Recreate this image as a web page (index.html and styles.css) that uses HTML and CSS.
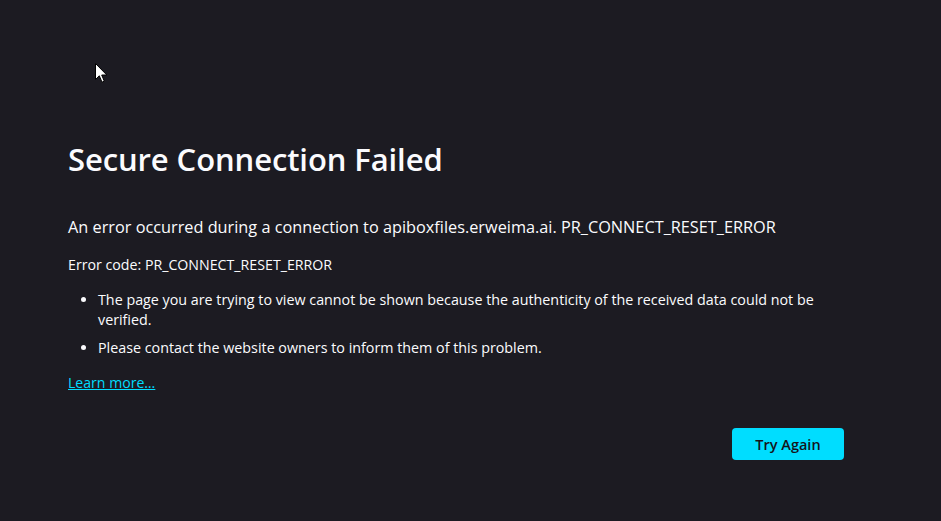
FILE: index.html
```html
<!DOCTYPE html>
<html lang="en">
<head>
<meta charset="utf-8">
<title>Problem loading page</title>
<link rel="stylesheet" href="styles.css">
</head>
<body>
<main class="container">
  <h1 class="title">Secure Connection Failed</h1>
  <p class="short-desc">An error occurred during a connection to apiboxfiles.erweima.ai. PR_CONNECT_RESET_ERROR</p>
  <p class="error-code">Error code: PR_CONNECT_RESET_ERROR</p>
  <ul class="long-desc">
    <li>The page you are trying to view cannot be shown because the authenticity of the received data could not be verified.</li>
    <li>Please contact the website owners to inform them of this problem.</li>
  </ul>
  <p class="learn"><a href="#" class="learn-link">Learn more…</a></p>
  <div class="actions">
    <button class="primary-btn" type="button">Try Again</button>
  </div>
</main>
<svg class="cursor" width="13" height="21" viewBox="0 0 13 21" aria-hidden="true">
  <path d="M0.5 0.5 L0.5 16.5 L4.3 12.8 L7 19.2 L9.3 18.2 L6.7 12 L11.8 12 Z" fill="#ffffff" stroke="#000000" stroke-width="1" stroke-linejoin="miter"/>
</svg>
</body>
</html>
```
FILE: styles.css
```css
html, body {
  margin: 0;
  padding: 0;
}
body {
  background: #1c1b22;
  color: #fbfbfe;
  font-family: "Open Sans", "Noto Sans", sans-serif;
  min-height: 521px;
  position: relative;
}
.container {
  width: 776px;
  margin-left: 68px;
  padding-top: 139px;
  display: flex;
  flex-direction: column;
}
.title {
  margin: 0;
  font-size: 31px;
  font-weight: 600;
  line-height: 40px;
  letter-spacing: -0.1px;
}
.short-desc {
  margin: 36px 0 0;
  font-size: 16.3px;
  line-height: 24px;
}
.error-code {
  margin: 16px 0 0;
  font-size: 14.2px;
  line-height: 20px;
}
.long-desc {
  margin: 15px 0 0;
  padding-left: 30px;
  font-size: 14.3px;
  line-height: 20px;
}
.long-desc li + li {
  margin-top: 8px;
}
.learn {
  margin: 15px 0 0;
  font-size: 14.1px;
  line-height: 20px;
}
.learn-link {
  color: #00ddff;
  text-decoration: underline;
}
.actions {
  margin-top: 35px;
  display: flex;
  justify-content: flex-end;
}
.primary-btn {
  width: 112px;
  height: 32px;
  border: none;
  border-radius: 4px;
  background: #00ddff;
  color: #15141a;
  font-family: "Open Sans", "Noto Sans", sans-serif;
  font-size: 14.5px;
  font-weight: 600;
  padding: 0;
}
.cursor {
  position: absolute;
  left: 95px;
  top: 63px;
}
```
